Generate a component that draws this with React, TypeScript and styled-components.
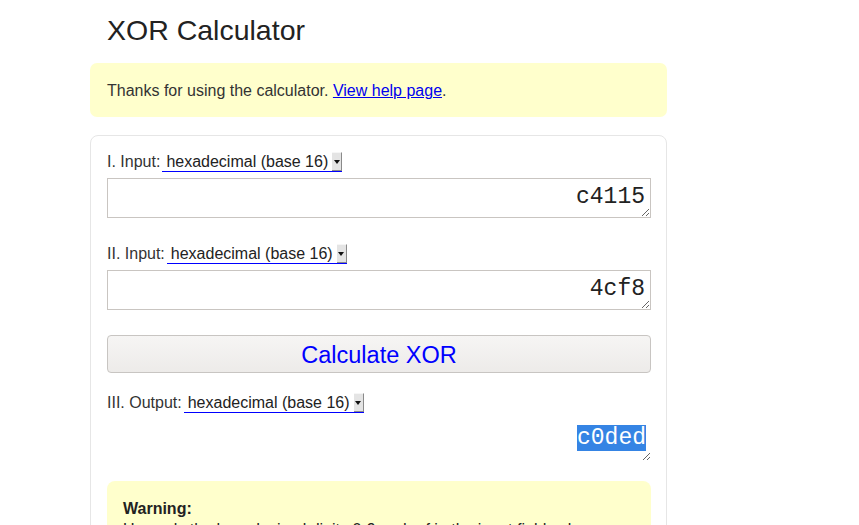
import React, { useEffect, useRef } from "react";
import styled, { createGlobalStyle } from "styled-components";

const Global = createGlobalStyle`
  html, body { margin: 0; padding: 0; background: #fff; }
  body { font-family: "Liberation Sans", Arial, sans-serif; color: #333; }
  * { box-sizing: border-box; }
`;

const Page = styled.div`
  width: 577px;
  margin-left: 90px;
  display: flex;
  flex-direction: column;
`;

const Title = styled.h1`
  margin: 13px 0 0 17px;
  font-size: 28.5px;
  font-weight: 400;
  line-height: 34px;
  color: #222;
`;

const Notice = styled.div`
  margin-top: 16px;
  background: #ffffcc;
  border-radius: 7px;
  padding: 18px 17px 16px;
  font-size: 16px;
  line-height: 20px;
  height: 54px;
`;

const Link = styled.a`
  color: #0000ee;
  text-decoration: underline;
`;

const Card = styled.div`
  margin-top: 18px;
  border: 1px solid #e6e6e6;
  border-radius: 8px;
  padding: 16px 16px 16px 16px;
  display: flex;
  flex-direction: column;
  & > * { flex-shrink: 0; }
`;

const Row = styled.div<{ $top: number }>`
  margin-top: ${(p) => p.$top}px;
  display: flex;
  align-items: center;
  height: 20px;
  font-size: 16px;
  color: #333;
`;

const Label = styled.label`
  margin-right: 2px;
  white-space: nowrap;
`;

const SelectBox = styled.div`
  display: flex;
  align-items: stretch;
  height: 20px;
  border-bottom: 1px solid #0000ff;
`;

const Select = styled.select`
  appearance: none;
  -webkit-appearance: none;
  border: none;
  background: transparent;
  font-family: "Liberation Sans", Arial, sans-serif;
  font-size: 16px;
  color: #222;
  padding: 0 4px 0 4px;
  margin: 0;
  height: 19px;
  line-height: 19px;
  outline: none;
`;

const Arrow = styled.span`
  width: 10px;
  height: 19px;
  background: #e4e4e4;
  border-right: 1px solid #8a8a8a;
  border-bottom: 1px solid #8a8a8a;
  border-top: 1px solid #f6f6f6;
  display: flex;
  align-items: center;
  justify-content: center;
  &::after {
    content: "";
    border-left: 3px solid transparent;
    border-right: 3px solid transparent;
    border-top: 4px solid #111;
  }
`;

const Field = styled.textarea<{ $bare?: boolean; $h: number }>`
  margin-top: 6px;
  width: 544px;
  height: ${(p) => p.$h}px;
  border: ${(p) => (p.$bare ? "none" : "1px solid #c9c5c1")};
  padding: ${(p) => (p.$bare ? "6px 5px 0 4px" : "5px 5px 0 4px")};
  font-family: "Liberation Mono", "Courier New", monospace;
  font-size: 23px;
  line-height: 26px;
  text-align: right;
  color: #222;
  resize: vertical;
  outline: none;
  background: #fff;
  &::selection {
    background: #3584e4;
    color: #fff;
  }
`;

const CalcButton = styled.button`
  margin-top: 25px;
  width: 544px;
  height: 38px;
  border: 1px solid #c8c5c2;
  border-radius: 4px;
  background: linear-gradient(#f6f5f4, #edebe9);
  font-family: "Liberation Sans", Arial, sans-serif;
  font-size: 23.5px;
  color: #0000ff;
  padding: 2px 0 0;
  cursor: pointer;
`;

const Warning = styled.div`
  margin-top: 20px;
  width: 544px;
  background: #ffffcc;
  border-radius: 8px;
  padding: 17px 16px 17px;
  font-size: 16px;
  line-height: 21px;
  color: #222;
`;

const Strong = styled.div`
  font-weight: 700;
`;

const bases = ["binary (base 2)", "octal (base 8)", "decimal (base 10)", "hexadecimal (base 16)"];

function BaseSelect({ id }: { id: string }) {
  return (
    <SelectBox>
      <Select id={id} defaultValue="hexadecimal (base 16)">
        {bases.map((b) => (
          <option key={b}>{b}</option>
        ))}
      </Select>
      <Arrow />
    </SelectBox>
  );
}

export default function App() {
  const outRef = useRef<HTMLTextAreaElement>(null);
  useEffect(() => {
    const el = outRef.current;
    if (el) {
      el.focus();
      el.select();
    }
  }, []);
  return (
    <Page>
      <Global />
      <Title>XOR Calculator</Title>
      <Notice>
        Thanks for using the calculator. <Link href="#">View help page</Link>.
      </Notice>
      <Card>
        <Row $top={0}>
          <Label htmlFor="in1">I. Input:</Label>
          <BaseSelect id="in1" />
        </Row>
        <Field $h={40} defaultValue="c4115" />
        <Row $top={26}>
          <Label htmlFor="in2">II. Input:</Label>
          <BaseSelect id="in2" />
        </Row>
        <Field $h={40} defaultValue="4cf8" />
        <CalcButton>Calculate XOR</CalcButton>
        <Row $top={20}>
          <Label htmlFor="out">III. Output:</Label>
          <BaseSelect id="out" />
        </Row>
        <Field ref={outRef} $bare $h={42} readOnly defaultValue="c0ded" />
        <Warning>
          <Strong>Warning:</Strong>
          Use only the hexadecimal digits 0-9 and a-f in the input fields above.
        </Warning>
      </Card>
    </Page>
  );
}
